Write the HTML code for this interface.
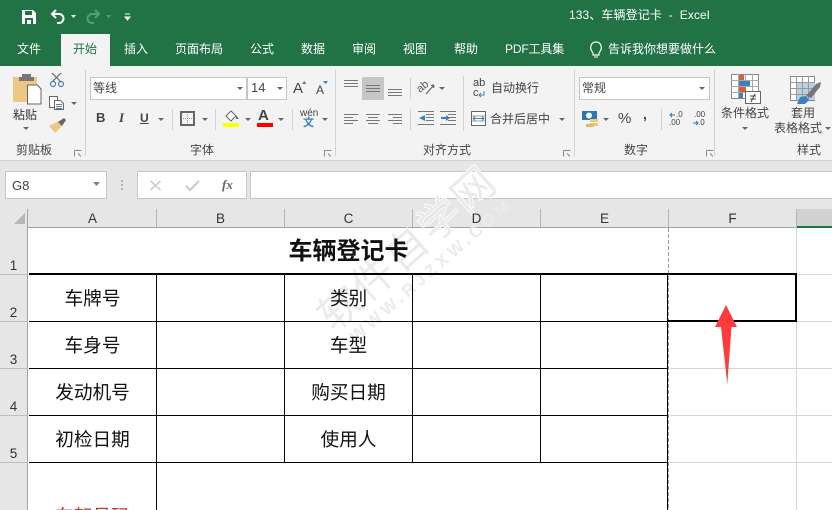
<!DOCTYPE html>
<html lang="zh-CN"><head><meta charset="utf-8"><title>133、车辆登记卡 - Excel</title>
<style>
html,body{margin:0;padding:0;width:832px;height:510px;overflow:hidden;background:#fff}
body{position:relative;font-family:"Liberation Sans","Noto Sans CJK SC",sans-serif;font-size:12px;color:#444}
div{position:absolute;box-sizing:border-box}
.t{white-space:nowrap;line-height:16px;height:16px}
.w{color:#fff}
.c{font-size:18.67px;line-height:24px;height:24px;color:#111;text-align:center;white-space:nowrap}
.h{font-size:13.5px;line-height:16px;height:16px;color:#333;text-align:center;white-space:nowrap}
.n{left:0;width:27px;font-size:13.5px;line-height:16px;height:16px;color:#333;text-align:center}
.box{background:#fff;border:1px solid #c6c6c6}
svg{position:absolute;left:0;top:0}
</style></head><body>
<div style="left:0;top:0;width:832px;height:66px;background:#217346"></div>
<div style="left:61px;top:34px;width:49px;height:32px;background:#f3f3f3"></div>
<div style="left:0;top:66px;width:832px;height:94px;background:#f3f3f3"></div>
<div style="left:0;top:160px;width:832px;height:50px;background:#e6e6e6;border-top:1px solid #d2d2d2"></div>

<div class="t w" style="left:569px;top:7px;letter-spacing:.1px">133、车辆登记卡&nbsp; -&nbsp; Excel</div>
<div class="t w" style="left:17px;top:41px">文件</div>
<div class="t" style="left:73px;top:41px;color:#217346">开始</div>
<div class="t w" style="left:124px;top:41px">插入</div>
<div class="t w" style="left:175px;top:41px">页面布局</div>
<div class="t w" style="left:250px;top:41px">公式</div>
<div class="t w" style="left:301px;top:41px">数据</div>
<div class="t w" style="left:352px;top:41px">审阅</div>
<div class="t w" style="left:403px;top:41px">视图</div>
<div class="t w" style="left:454px;top:41px">帮助</div>
<div class="t w" style="left:505px;top:41px;letter-spacing:-.15px">PDF工具集</div>
<div class="t w" style="left:608px;top:41px">告诉我你想要做什么</div>

<!-- ribbon boxes -->
<div class="box" style="left:90px;top:77px;width:157px;height:23px"></div>
<div class="box" style="left:247px;top:77px;width:40px;height:23px"></div>
<div class="box" style="left:579px;top:77px;width:131px;height:23px"></div>
<div style="left:362px;top:77px;width:22px;height:23px;background:#c6c6c6"></div>
<div class="t" style="left:93px;top:80px">等线</div>
<div class="t" style="left:251px;top:80px;font-size:13px">14</div>
<div class="t" style="left:582px;top:80px">常规</div>
<div class="t" style="left:13px;top:107px;color:#333">粘贴</div>
<div class="t" style="left:491px;top:80px">自动换行</div>
<div class="t" style="left:490px;top:111px">合并后居中</div>
<div class="t" style="left:721px;top:105px">条件格式</div>
<div class="t" style="left:791px;top:105px">套用</div>
<div class="t" style="left:774px;top:120px">表格格式</div>
<div class="t" style="left:16px;top:142px">剪贴板</div>
<div class="t" style="left:190px;top:142px">字体</div>
<div class="t" style="left:423px;top:142px">对齐方式</div>
<div class="t" style="left:624px;top:142px">数字</div>
<div class="t" style="left:797px;top:142px">样式</div>
<div class="t" style="left:96px;top:110px;font-weight:bold;font-size:13px">B</div>
<div class="t" style="left:119px;top:110px;font-style:italic;font-weight:bold;font-size:13px;font-family:'Liberation Serif',serif">I</div>
<div class="t" style="left:140px;top:110px;font-weight:bold;font-size:12px;text-decoration:underline">U</div>
<div class="t" style="left:293px;top:81px;font-size:15px">A</div>
<div class="t" style="left:316px;top:82px;font-size:12px">A</div>
<div class="t" style="left:258px;top:109px;font-size:15px;font-weight:bold;line-height:14px">A</div>
<div class="t" style="left:300px;top:109px;font-size:10px;line-height:10px;height:10px">wén</div>
<div class="t" style="left:303px;top:118px;font-size:11px;line-height:11px;height:11px;color:#3f7fbf;font-weight:bold">文</div>
<div class="t" style="left:473px;top:78px;font-size:11px;line-height:11px;height:11px">ab</div>
<div class="t" style="left:473px;top:88px;font-size:11px;line-height:11px;height:11px">c</div>
<div class="t" style="left:618px;top:111px;font-size:15px;line-height:16px">%</div>
<div class="t" style="left:643px;top:106px;font-size:14px;font-weight:bold">,</div>
<div class="t" style="left:676px;top:111px;font-size:8px;line-height:8px;height:8px">.0</div>
<div class="t" style="left:669px;top:119px;font-size:8px;line-height:8px;height:8px">.00</div>
<div class="t" style="left:694px;top:111px;font-size:8px;line-height:8px;height:8px">.00</div>
<div class="t" style="left:698px;top:119px;font-size:8px;line-height:8px;height:8px">.0</div>

<!-- formula bar -->
<div class="box" style="left:5px;top:171px;width:102px;height:28px"></div>
<div class="box" style="left:137px;top:171px;width:110px;height:28px"></div>
<div class="box" style="left:250px;top:171px;width:582px;height:28px;border-right:0"></div>
<div class="t" style="left:12px;top:178px;font-size:13px">G8</div>
<div class="t" style="left:222px;top:177px;font-family:'Liberation Serif',serif;font-style:italic;font-weight:bold;font-size:13px;color:#666">fx</div>

<!-- headers -->
<div style="left:0;top:209px;width:28px;height:301px;background:#e6e6e6;border-right:1px solid #a5a5a5"></div>
<div style="left:28px;top:209px;width:804px;height:19px;background:#e6e6e6;border-bottom:1px solid #a5a5a5"></div>
<div style="left:797px;top:209px;width:35px;height:19px;background:#d2d2d2;border-bottom:2px solid #217346"></div>

<!-- watermark -->
<svg width="832" height="510" viewBox="0 0 832 510">
<text x="334" y="333" transform="rotate(-41.600 334 333)" font-size="42" letter-spacing="2.500" font-family="'Liberation Sans','Noto Sans CJK SC',sans-serif" fill="#ebebeb" stroke="#fff" stroke-width="1.500" paint-order="stroke">软件自学网</text>
<text x="356" y="343" transform="rotate(-41 356 343)" font-size="17" letter-spacing="4.200" font-weight="bold" font-family="'Liberation Sans',sans-serif" fill="#ebebeb">WWW.RJZXW.COM</text>
</svg>

<div class="h" style="left:29px;top:211px;width:127px">A</div>
<div class="h" style="left:157px;top:211px;width:127px">B</div>
<div class="h" style="left:285px;top:211px;width:127px">C</div>
<div class="h" style="left:413px;top:211px;width:127px">D</div>
<div class="h" style="left:541px;top:211px;width:127px">E</div>
<div class="h" style="left:669px;top:211px;width:127px">F</div>
<div class="n" style="top:258px">1</div>
<div class="n" style="top:305px">2</div>
<div class="n" style="top:352px">3</div>
<div class="n" style="top:399px">4</div>
<div class="n" style="top:446px">5</div>

<!-- grid / icons -->
<svg width="832" height="510" viewBox="0 0 832 510" fill="none">
<!-- QAT -->
<path d="M22 10h11l3 3v11H22z" fill="#fff"/><path d="M25 11h7v4h-7z" fill="#217346"/><path d="M25 18h8v6h-8z" fill="#217346"/><path d="M27 20h4v4h-4z" fill="#fff"/>
<path d="M56 10l-4 4 4 4" stroke="#fff" stroke-width="2"/><path d="M52 14h7a4.500 4.500 0 0 1 0 9h-2" stroke="#fff" stroke-width="2"/>
<path d="M71 15h5l-2.500 3z" fill="#fff"/>
<path d="M95 10l4 4-4 4" stroke="#5c9a7b" stroke-width="2"/><path d="M99 14h-7a4.500 4.500 0 0 0 0 9h2" stroke="#5c9a7b" stroke-width="2"/>
<path d="M106 15h5l-2.500 3z" fill="#5c9a7b"/>
<path d="M125 14h5M125 17h5l-2.500 3z" stroke="#fff" fill="#fff" stroke-width="1"/>
<!-- bulb -->
<path d="M593 53c-5-6-1-11 3-11s8 5 3 11v2h-6z" stroke="#fff" stroke-width="1.200"/><path d="M594 57h4" stroke="#fff"/>
<!-- separators -->
<path d="M85.500 70v86M335.500 70v86M574.500 70v86M714.500 70v86" stroke="#d2d2d2"/>
<path d="M172.500 109v21M215.500 109v21M292.500 109v21M410.500 78v21M410.500 109v21M463.500 76v55M661.500 109v21" stroke="#d2d2d2"/>
<!-- paste -->
<path d="M13 77h24v25H13z" fill="#edc783"/><path d="M22 74h9v3h3v4H19v-4h3z" fill="#777"/>
<path d="M27.500 85h10l3.500 4v15H27.500z" fill="#fff" stroke="#666"/>
<!-- cut -->
<path d="M52 73l9 9M61 73l-9 9" stroke="#666" stroke-width="1.200"/><circle cx="53" cy="84" r="2.500" stroke="#4a7eb5" stroke-width="1.200"/><circle cx="61" cy="84" r="2.500" stroke="#4a7eb5" stroke-width="1.200"/>
<!-- copy -->
<path d="M49.500 96.500h8v11h-8z" fill="#fff" stroke="#666"/><path d="M54.500 100.500h6l3 3v6h-9z" fill="#fff" stroke="#666"/><path d="M56 104.500h6M56 106.500h6M56 108.500h6" stroke="#4a7eb5"/>
<!-- painter -->
<path d="M49 126l10-5 3 5-7 7z" fill="#edc783"/><path d="M58 122l6-4 2 2-4 6z" fill="#666"/>
<!-- launchers -->
<g stroke="#888"><path d="M74.500 150.500h7M74.500 150.500v6M78 153.500l3 3" /><path d="M324.500 150.500h7M324.500 150.500v6M328 153.500l3 3"/><path d="M563.500 150.500h7M563.500 150.500v6M567 153.500l3 3"/><path d="M706.500 150.500h7M706.500 150.500v6M710 153.500l3 3"/></g>
<!-- arrows -->
<g fill="#666"><path d="M23 127h6l-3 3z"/><path d="M71 102h6l-3 3z"/><path d="M237 87h6l-3 3z"/><path d="M277 87h6l-3 3z"/><path d="M158 118h6l-3 3z"/><path d="M202 118h6l-3 3z"/><path d="M245 118h6l-3 3z"/><path d="M278 118h6l-3 3z"/><path d="M322 118h6l-3 3z"/><path d="M439 87h6l-3 3z"/><path d="M559 118h6l-3 3z"/><path d="M699 87h6l-3 3z"/><path d="M603 118h6l-3 3z"/><path d="M742 127h6l-3 3z"/><path d="M825 127h6l-3 3z"/><path d="M93 182h7l-3.500 4z" fill="#808080"/></g>
<path d="M302 84l2.250-3 2.250 3z" fill="#4a7eb5"/><path d="M323 81h5l-2.500 3z" fill="#4a7eb5"/>
<!-- borders -->
<path d="M181 112h13v13h-13z" stroke="#666" stroke-width="2"/><path d="M187.500 114v10M183 118.500h10" stroke="#999" stroke-dasharray="1 1"/>
<!-- fill -->
<path d="M226 116l5-5 5 5-5 5z" fill="#fff" stroke="#666"/><path d="M236 115l3 4h-3z" fill="#4a7eb5"/><path d="M223 123h16v4h-16z" fill="#ff0"/>
<path d="M257 123h16v4h-16z" fill="#f00"/>
<!-- alignment -->
<g stroke="#777"><path d="M344 80.500h14M344 83.500h14M344 86.500h14"/><path d="M366 85.500h14M366 88.500h14M366 91.500h14"/><path d="M388 89.500h14M388 92.500h14M388 95.500h14"/>
<path d="M344 114.500h14M344 117.500h9M344 120.500h14M344 123.500h9"/><path d="M366 114.500h14M368 117.500h10M366 120.500h14M368 123.500h10"/><path d="M388 114.500h14M393 117.500h9M388 120.500h14M393 123.500h9"/>
<path d="M426 114.500h8M426 117.500h8M426 120.500h8M418 124.500h16M418 111.500h16"/><path d="M448 114.500h8M448 117.500h8M448 120.500h8M440 124.500h16M440 111.500h16"/></g>
<path d="M425 115l-6 3 6 3z" fill="#3f7fbf"/><path d="M441 117h5v-2l4 3-4 3v-2h-5z" fill="#3f7fbf"/>
<!-- orientation -->
<path d="M426 94l8-9M434 85l-3 .5M434 85l-.5 3" stroke="#666" stroke-width="1.200"/><text x="420" y="93" font-size="11" fill="#555" transform="rotate(-40 420 93)">ab</text>
<path d="M479 95h5v-4M479 95l2-2M479 95l2 2" stroke="#3f7fbf"/>
<!-- merge -->
<path d="M471.500 111.500h14v14h-14z" stroke="#666" fill="#fff"/><path d="M472 116h13M472 121h13" stroke="#999"/><path d="M474 118.500h9" stroke="#3f7fbf"/><path d="M475 116.500l-2 2 2 2M482 116.500l2 2-2 2" stroke="#3f7fbf" fill="none"/>
<!-- accounting -->
<path d="M582 111h15v9h-15z" fill="#2e75b6"/><circle cx="589" cy="115.500" r="3" fill="#fff"/><path d="M590 119h8v3h-8zM590 123h8v3h-8z" fill="#edc783"/><path d="M586 124h8v3h-8z" fill="#e6b85c"/>
<!-- decimal arrows -->
<path d="M675 115h-5M672 113l-2 2 2 2" stroke="#2e75b6" fill="none"/><path d="M693 123h5M696 121l2 2-2 2" stroke="#2e75b6" fill="none"/>
<!-- cond format -->
<path d="M731.500 74.500h27v24h-27z" stroke="#888" fill="#fff"/><path d="M731 80.500h28M731 86.500h28M731 92.500h28M738.500 74v24M745.500 74v24M752.500 74v24" stroke="#aaa"/>
<path d="M739 75h5v5h-5z" fill="#d95f3b"/><path d="M739 81h11v5h-11z" fill="#3f7fbf"/><path d="M739 87h7v5h-7z" fill="#d95f3b"/><path d="M739 93h4v5h-4z" fill="#3f7fbf"/>
<path d="M745.500 91.500h15v12h-15z" fill="#fff" stroke="#666"/><path d="M750 96h6M750 99h6M755 94l-4 8" stroke="#444"/>
<!-- table style -->
<path d="M790.500 76.500h24v24h-24z" stroke="#888" fill="#fff"/><path d="M796 82h19v18h-19z" fill="#bcd0e4"/><path d="M790 82.500h25M790 88.500h25M790 94.500h25M796.500 76v24M802.500 76v24M808.500 76v24" stroke="#999"/>
<path d="M806 96l10-12 5-2-1 5-9 11z" fill="#777"/><path d="M797 104l3-7 6-1 3 4-4 4z" fill="#3f7fbf"/>
<!-- formula bar icons -->
<path d="M150.500 181l10 9M160.500 181l-10 9" stroke="#c8c8c8" stroke-width="1.500"/>
<path d="M186 186l4 4 9-9" stroke="#c8c8c8" stroke-width="2"/>
<path d="M122 180v2M122 184v2M122 188v2" stroke="#b0b0b0" stroke-width="2"/>
<!-- corner -->
<path d="M25 213v11H14z" fill="#b7b7b7"/>
<!-- header separators -->
<path d="M156.500 209v18M284.500 209v18M412.500 209v18M540.500 209v18M668.500 209v18M796.500 209v18" stroke="#b5b5b5"/>
<!-- row header ticks -->
<path d="M0 274.500h28M0 321.500h28M0 368.500h28M0 415.500h28M0 462.500h28" stroke="#bdbdbd"/>
<!-- light gridlines -->
<path d="M670 274.500h162M670 321.500h162M670 368.500h162M670 415.500h162M670 462.500h162M796.500 228v282" stroke="#d4d4d4"/>
<!-- black lines -->
<path d="M29 274h639" stroke="#000" stroke-width="2"/>
<path d="M29 321.500h638M29 368.500h638M29 415.500h638M29 462.500h638" stroke="#000"/>
<path d="M156.500 274v236M284.500 274v189M412.500 274v189M540.500 274v189M667.500 274v236" stroke="#000"/>
<path d="M668.500 228v282" stroke="#9a9a9a" stroke-dasharray="4 2"/>
<!-- selection -->
<path d="M668 274h128v47H668" stroke="#000" stroke-width="2"/>
</svg>

<!-- cells -->
<div class="c" style="left:29px;top:238px;width:639px;font-weight:bold;font-size:24px;line-height:28px;height:28px">车辆登记卡</div>
<div class="c" style="left:29px;top:287px;width:127px">车牌号</div>
<div class="c" style="left:29px;top:334px;width:127px">车身号</div>
<div class="c" style="left:29px;top:381px;width:127px">发动机号</div>
<div class="c" style="left:29px;top:428px;width:127px">初检日期</div>
<div class="c" style="left:29px;top:505px;width:127px;color:#c33">车架号码</div>
<div class="c" style="left:285px;top:287px;width:127px">类别</div>
<div class="c" style="left:285px;top:334px;width:127px">车型</div>
<div class="c" style="left:285px;top:381px;width:127px">购买日期</div>
<div class="c" style="left:285px;top:428px;width:127px">使用人</div>

<!-- red arrow -->
<svg width="832" height="510" viewBox="0 0 832 510"><path d="M726 305L737 327H731.500L727.300 384L721 327H715Z" fill="#ff3b3b"/></svg>
</body></html>
